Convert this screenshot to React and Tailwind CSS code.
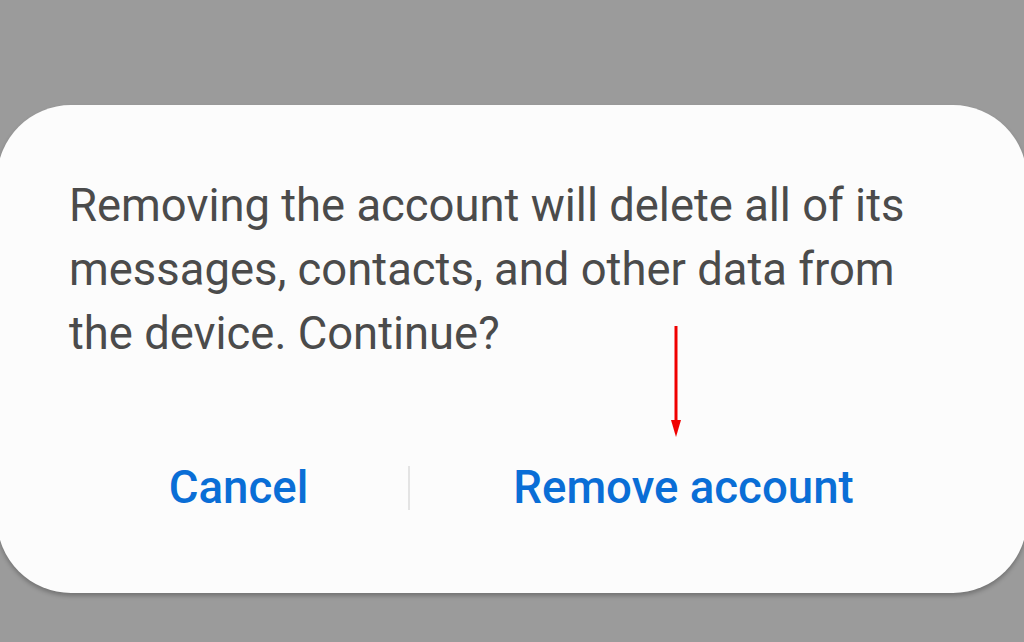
import React from "react";

const App = () => {
  return (
    <div
      className="w-[1024px] h-[642px] bg-[#9b9b9b] overflow-hidden pt-[105px]"
      style={{ fontFamily: "Roboto, 'Liberation Sans', sans-serif" }}
    >
      <div className="relative -ml-[3px] w-[1030px] h-[488px] bg-[#fcfcfc] rounded-[74px] shadow-[0_3px_4px_rgba(0,0,0,0.25)] pl-[72px] pr-[70px] pt-[69px]">
        <p className="text-[45.4px] leading-[64px] text-[#4b4b4b]">
          Removing the account will delete all of its
          <br />
          messages, contacts, and other data from
          <br />
          the device. Continue?
        </p>

        {/* red annotation arrow */}
        <svg
          className="absolute left-[671px] top-[221px]"
          width="16"
          height="112"
          viewBox="0 0 16 112"
        >
          <rect x="6.5" y="0" width="3" height="96" fill="#f00000" />
          <polygon points="3,94 13,94 8,111" fill="#f00000" />
        </svg>

        <div className="flex items-center mt-[94px]">
          <div className="w-[339px] flex justify-center">
            <span className="text-[45.6px] font-medium text-[#0a6ed6] leading-[56px]">
              Cancel
            </span>
          </div>
          <div className="w-[2px] h-[44px] bg-[#e4e4e4]" />
          <div className="flex-1 flex justify-center">
            <span className="text-[45.6px] font-medium text-[#0a6ed6] leading-[56px]">
              Remove account
            </span>
          </div>
        </div>
      </div>
    </div>
  );
};

export default App;
